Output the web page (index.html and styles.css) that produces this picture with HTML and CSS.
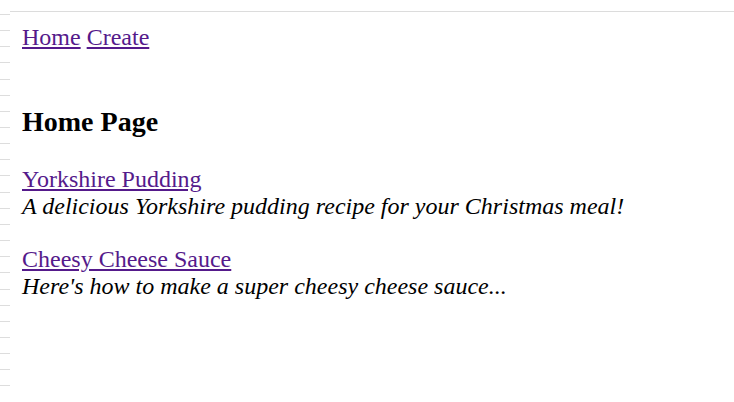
FILE: index.html
```html
<!DOCTYPE html>
<html lang="en">
<head>
<meta charset="utf-8">
<title>Home Page</title>
<link rel="stylesheet" href="styles.css">
</head>
<body>
<div class="frame">
  <div class="ruler"></div>
  <div class="page">
    <nav class="nav"><a href="#">Home</a> <a href="#">Create</a></nav>
    <h3 class="title">Home Page</h3>
    <div class="entry">
      <a class="entry-link" href="#">Yorkshire Pudding</a>
      <em class="entry-desc">A delicious Yorkshire pudding recipe for your Christmas meal!</em>
    </div>
    <div class="entry">
      <a class="entry-link" href="#">Cheesy Cheese Sauce</a>
      <em class="entry-desc">Here's how to make a super cheesy cheese sauce...</em>
    </div>
  </div>
</div>
</body>
</html>
```
FILE: styles.css
```css
html, body {
  margin: 0;
  padding: 0;
  background: #fff;
}

.frame {
  display: flex;
  width: 734px;
  height: 402px;
  overflow: hidden;
}

.ruler {
  flex: 0 0 10px;
  height: 402px;
  background: repeating-linear-gradient(
    to bottom,
    transparent 0,
    transparent 14px,
    #dddddd 14px,
    #dddddd 15px,
    transparent 15px,
    transparent 16.15px
  );
}

.page {
  flex: 1;
  margin-top: 11px;
  border-top: 1px solid #dcdcdc;
  padding: 12px;
  font-family: "Liberation Serif", "Times New Roman", serif;
  font-size: 24px;
  color: #000;
}

.page a {
  color: #551a8b;
}

.nav {
  display: block;
}

.title {
  font-size: 28px;
  font-weight: bold;
  margin: 55px 0 28px;
}

.entry {
  margin-bottom: 26px;
}

.entry-link,
.entry-desc {
  display: block;
}

.entry-desc {
  font-style: italic;
  font-family: "Liberation Serif", "Times New Roman", serif;
}

.entry-link {
  width: max-content;
}
```
